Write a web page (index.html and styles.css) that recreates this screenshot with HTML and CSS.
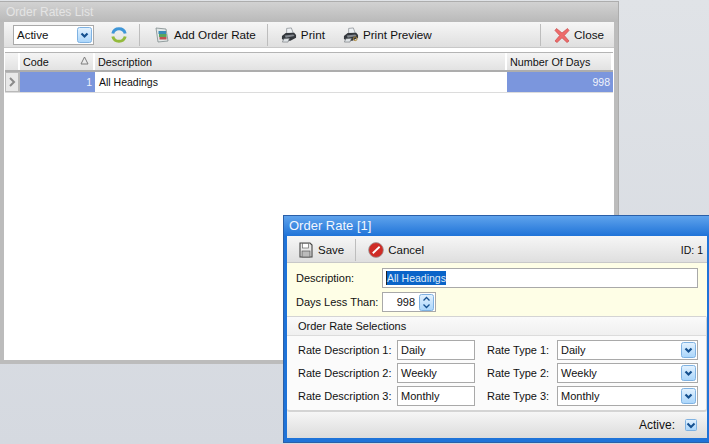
FILE: index.html
```html
<!DOCTYPE html>
<html>
<head>
<meta charset="utf-8">
<title>Order Rates</title>
<link rel="stylesheet" href="styles.css">
</head>
<body>
<svg class="defs" width="0" height="0">
  <defs>
    <linearGradient id="btn" x1="0" y1="0" x2="0" y2="1"><stop offset="0" stop-color="#e4f2fe"/><stop offset="1" stop-color="#a9d5fb"/></linearGradient>
    <g id="arrow"><path d="M4.5 6.5 L7.5 9.5 L10.5 6.5" fill="none" stroke="#15508f" stroke-width="2.2"/></g>
    <g id="printer">
      <path d="M6 1 L11 0.5 L13 6 L6 7 Z" fill="#eef1f4" stroke="#8b9096" stroke-width="0.8"/>
      <path d="M1 9 L5 6 L14 5.5 L16 8 L16 11 L10 14 L3 14 L1 12 Z" fill="#33373c"/>
      <path d="M4 8.5 L13 7.5 L14.5 9 L5 11 Z" fill="#83888f"/>
      <path d="M3 12 L9 11.5 L7.5 15.5 L1.5 15.5 Z" fill="#dfe3e6" stroke="#62676d" stroke-width="0.6"/>
    </g>
  </defs>
</svg>

<section class="window list-window">
  <h1 class="title list-title">Order Rates List</h1>
  <div class="list-inner">
    <div class="toolbar list-toolbar">
      <div class="combo filter"><span class="combo-text">Active</span><svg class="drop" viewBox="0 0 15 16"><rect x="0.5" y="0.5" width="14" height="15" rx="2" fill="url(#btn)" stroke="#7fb2e2"/><use href="#arrow"/></svg></div>
      <svg class="tool-icon refresh" viewBox="0 0 16 16">
        <path d="M1.8 6.5 A6.4 6.4 0 0 1 14.2 6.5" fill="none" stroke="#3f96d8" stroke-width="3"/>
        <path d="M14.2 9.5 A6.4 6.4 0 0 1 1.8 9.5" fill="none" stroke="#93ba3c" stroke-width="3"/>
      </svg>
      <span class="sep"></span>
      <button class="tool add"><svg class="tool-icon" viewBox="0 0 16 16"><path d="M2 1 L12 2 L14 14 L4 15 Z" fill="#e3e8e8" stroke="#7d8a8c" stroke-width="0.8"/><rect x="4.5" y="4" width="7.5" height="3" fill="#3a8cb8"/><rect x="5" y="7" width="7.5" height="3" fill="#5aa55c"/><rect x="5.5" y="10" width="7" height="2.5" fill="#c25050"/></svg>Add Order Rate</button>
      <span class="sep"></span>
      <button class="tool print"><svg class="tool-icon" viewBox="0 0 17 16"><use href="#printer"/></svg>Print</button>
      <button class="tool preview"><svg class="tool-icon" viewBox="0 0 17 16"><use href="#printer"/><circle cx="13" cy="12" r="2" fill="none" stroke="#b08a3a"/></svg>Print Preview</button>
      <span class="grow"></span>
      <span class="sep"></span>
      <button class="tool close"><svg class="tool-icon" viewBox="0 0 16 16"><path d="M2.5 1.5 L8 6 L13.5 1.5 L15 3.5 L10.3 8.5 L15 14 L13 15.5 L8 10.8 L3 15.5 L1 14 L5.7 8.5 L1 3.5 Z" fill="#ee6a6a" stroke="#c84a4a" stroke-width="0.7"/></svg>Close</button>
    </div>
    <div class="grid">
      <div class="grid-row head">
        <div class="cell indicator"></div>
        <div class="cell code">Code<svg class="sort" viewBox="0 0 9 9"><path d="M4.5 1 L8 8 L1 8 Z" fill="none" stroke="#7d7d7d"/></svg></div>
        <div class="cell desc">Description</div>
        <div class="cell days">Number Of Days</div>
      </div>
      <div class="grid-row body">
        <div class="cell indicator"><svg class="chev" viewBox="0 0 7 10"><path d="M1 1 L5 5 L1 9" fill="none" stroke="#8a8a8a" stroke-width="2"/></svg></div>
        <div class="cell code sel">1</div>
        <div class="cell desc">All Headings</div>
        <div class="cell days sel">998</div>
      </div>
    </div>
  </div>
</section>

<section class="window rate-window">
  <h2 class="title rate-title">Order Rate [1]</h2>
  <div class="rate-inner">
    <div class="toolbar rate-toolbar">
      <button class="tool save"><svg class="tool-icon" viewBox="0 0 16 16"><path d="M2 1 L12 1 L14 3 L14 15 L2 15 Z" fill="#e9e9e9" stroke="#444" stroke-width="1.1"/><rect x="4.5" y="1.5" width="6" height="4.5" fill="#fff" stroke="#666" stroke-width="0.7"/><rect x="4" y="9" width="8" height="6" fill="#bbb" stroke="#555" stroke-width="0.7"/></svg>Save</button>
      <span class="sep"></span>
      <button class="tool cancel"><svg class="tool-icon" viewBox="0 0 16 16"><circle cx="8" cy="8" r="7.4" fill="#cf2c26" stroke="#9c9c9c" stroke-width="0.8"/><path d="M4.2 10.5 L11 4 L12.2 5.4 L5.4 12 Z" fill="#fff"/></svg>Cancel</button>
      <span class="grow"></span>
      <span class="id">ID: 1</span>
    </div>
    <div class="yellow">
      <div class="field-row"><label class="lbl">Description:</label><div class="input desc-input"><span class="selected">All Headings</span></div></div>
      <div class="field-row"><label class="lbl">Days Less Than:</label><div class="input spin"><span class="spin-val">998</span><svg class="spin-btn" viewBox="0 0 15 17"><rect x="0.5" y="0.5" width="14" height="16" rx="2" fill="url(#btn)" stroke="#7fb2e2"/><path d="M4.5 6.5 L7.5 3.5 L10.5 6.5 M4.5 10.5 L7.5 13.5 L10.5 10.5" fill="none" stroke="#15508f" stroke-width="1.3"/></svg></div></div>
    </div>
    <div class="group">
      <div class="group-title">Order Rate Selections</div>
      <div class="group-body">
        <div class="sel-row"><label class="rlbl">Rate Description 1:</label><div class="input rate-input">Daily</div><label class="tlbl">Rate Type 1:</label><div class="combo type"><span class="combo-text">Daily</span><svg class="drop" viewBox="0 0 15 16"><rect x="0.5" y="0.5" width="14" height="15" rx="2" fill="url(#btn)" stroke="#7fb2e2"/><use href="#arrow"/></svg></div></div>
        <div class="sel-row"><label class="rlbl">Rate Description 2:</label><div class="input rate-input">Weekly</div><label class="tlbl">Rate Type 2:</label><div class="combo type"><span class="combo-text">Weekly</span><svg class="drop" viewBox="0 0 15 16"><rect x="0.5" y="0.5" width="14" height="15" rx="2" fill="url(#btn)" stroke="#7fb2e2"/><use href="#arrow"/></svg></div></div>
        <div class="sel-row"><label class="rlbl">Rate Description 3:</label><div class="input rate-input">Monthly</div><label class="tlbl">Rate Type 3:</label><div class="combo type"><span class="combo-text">Monthly</span><svg class="drop" viewBox="0 0 15 16"><rect x="0.5" y="0.5" width="14" height="15" rx="2" fill="url(#btn)" stroke="#7fb2e2"/><use href="#arrow"/></svg></div></div>
      </div>
    </div>
    <div class="footer"><span class="active-lbl">Active:</span><svg class="check" viewBox="0 0 12 12"><rect x="0.5" y="0.5" width="11" height="11" rx="1" fill="url(#btn)" stroke="#7fb2e2"/><path d="M2.5 4.5 L6 8 L9.5 4.5" fill="none" stroke="#15508f" stroke-width="2"/></svg></div>
  </div>
</section>
</body>
</html>
```

FILE: styles.css
```css
* { box-sizing: border-box; }
html, body { margin: 0; height: 100%; }
body {
  width: 709px; height: 444px; overflow: hidden; position: relative;
  background: linear-gradient(#e0e3e7, #d5d9e0);
  font: 11px/14px "Liberation Sans", Arial, sans-serif; color: #111;
}
.defs { position: absolute; }
.window { position: absolute; }
.title { margin: 0; font-weight: normal; font-size: 13px; }
button { font: inherit; color: inherit; background: none; border: 0; padding: 0; display: flex; align-items: center; }

.list-window {
  left: 0; top: 1px; width: 619px; height: 363px;
  background: #bcbcbc; border: 1px solid #adadad; border-width: 1px 1px 0 0;
  display: flex; flex-direction: column; padding: 0 4px 4px 4px;
}
.list-title { height: 20px; line-height: 20px; margin: 0 -4px; padding-left: 6px; color: #e4e4e4; background: linear-gradient(#d2d2d2, #b9b9b9); flex: none; font-size: 12px; }
.list-inner { flex: 1; background: #fff; min-height: 0; }
.toolbar { display: flex; align-items: center; background: linear-gradient(#f6f6f6, #dfdfdf); font-size: 11.7px; }
.list-toolbar { height: 26px; border-bottom: 1px solid #c8c8c8; padding: 0 10px 0 9px; }
.tool-icon { width: 16px; height: 16px; flex: none; }
.sep { width: 1px; height: 22px; background: #bdbdbd; flex: none; }
.grow { flex: 1; }
.combo { display: flex; align-items: center; justify-content: space-between; background: #fff; border: 1px solid #a9a9a9; }
.combo-text { padding-left: 3px; }
.drop { width: 15px; height: 16px; flex: none; margin-right: 1px; }
.filter { width: 81px; height: 20px; font-size: 11.5px; }
.refresh { margin: 0 12px 0 17px; }
.tool { flex: none; }
.tool .tool-icon { margin-right: 4px; }
.add { margin: 0 11px 0 14px; }
.print { margin: 0 0 0 13px; }
.preview { margin-left: 18px; }
.close { margin-left: 13px; }

.grid { margin: 4px 1px 0 1px; }
.grid-row { display: grid; grid-template-columns: 15px 75px 412px 106px; }
.head { height: 20px; background: linear-gradient(#f4f4f4, #e2e2e2); border-top: 1px solid #b4b4b4; border-bottom: 2px solid #adadad; font-size: 10.8px; }
.head .cell { border-right: 2px solid #fff; padding: 1px 0 0 3px; line-height: 16px; position: relative; }
.body { height: 21px; border-bottom: 1px solid #dcdcdc; font-size: 10.5px; }
.body .cell { padding: 2px 3px 0; line-height: 16px; }
.body .desc { padding-left: 4px; }
.body .indicator { background: #e8e8e8; border: 1px solid #b9b9b9; border-right-width: 2px; padding: 4px 0 0 3px; }
.chev { display: block; width: 7px; height: 10px; }
.body .code { text-align: right; }
.sel { background: #7b96dd; color: #f0f3fb; text-align: right; }
.sort { position: absolute; right: 4px; top: 3px; width: 9px; height: 9px; }

.rate-window {
  left: 283px; top: 215px; width: 426px; height: 228px;
  background: #1f73d8; padding: 0 2px 4px 3px;
  display: flex; flex-direction: column;
  border: 1px solid #2a5fa8; border-right: 0;
}
.rate-title { height: 20px; line-height: 20px; margin: 0 -2px 0 -3px; padding-left: 5px; color: #f2f6fd; background: linear-gradient(#5fa3ec, #1f73d8); flex: none; }
.rate-inner { flex: 1; background: #eee; display: flex; flex-direction: column; min-height: 0; }
.rate-toolbar { height: 27px; padding: 1px 4px 0 11px; border-bottom: 1px solid #c8c8c8; flex: none; font-size: 11.5px; }
.save { margin-right: 11px; }
.cancel { margin-left: 12px; }
.id { font-size: 10.5px; }
.yellow { height: 53px; flex: none; background: #fefee6; padding: 5px 0 0 9px; }
.field-row { display: flex; align-items: center; height: 20px; margin-bottom: 4px; }
.lbl { width: 86px; flex: none; }
.input { background: #fff; border: 1px solid #a9a9a9; height: 20px; display: flex; align-items: center; padding-left: 3px; }
.desc-input { width: 316px; font-size: 10.5px; }
.selected { background: #0a64c8; color: #dfeaf7; line-height: 14px; border-left: 1px solid #222; }
.spin { width: 54px; justify-content: flex-end; padding: 0 1px 0 0; }
.spin-val { margin-right: 4px; }
.spin-btn { width: 15px; height: 17px; }
.group { height: 96px; flex: none; background: #fbfbfb; border-radius: 3px; border-bottom: 2px solid #d4d4d4; border-right: 1px solid #d4d4d4; display: flex; flex-direction: column; }
.group-title { height: 20px; line-height: 19px; padding-left: 11px; background: linear-gradient(#fafafa, #f0f0f0); border-bottom: 1px solid #dcdcdc; border-top: 1px solid #d4d4d4; flex: none; }
.group-body { padding: 4px 0 0 11px; }
.sel-row { display: flex; align-items: center; height: 20px; margin-bottom: 3px; }
.rlbl { width: 99px; flex: none; }
.rate-input { width: 78px; flex: none; }
.tlbl { width: 70px; flex: none; margin-left: 12px; }
.type { width: 141px; height: 20px; flex: none; }
.footer { flex: 1; display: flex; align-items: center; justify-content: flex-end; padding-right: 10px; background: linear-gradient(#f6f6f6, #dcdcdc); }
.active-lbl { margin-right: 10px; font-size: 12px; }
.check { width: 12px; height: 12px; }
```
